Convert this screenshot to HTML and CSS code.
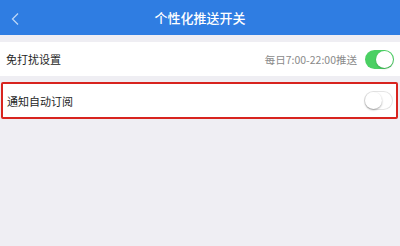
FILE: index.html
```html
<!DOCTYPE html>
<html lang="zh-CN">
<head>
    <meta charset="UTF-8">
    <meta name="viewport" content="width=device-width, initial-scale=1.0">
    <title>个性化推送开关</title>
    <link rel="stylesheet" href="styles.css">
</head>
<body>

    <!-- Top navigation bar -->
    <div class="nav-bar">
        <span class="back-btn">
            <svg width="8" height="12" viewBox="0 0 8 12">
                <path d="M7 0.5 L1.5 6 L7 11.5" fill="none" stroke="#bcd6f6" stroke-width="1.3"/>
            </svg>
        </span>
        <h1>个性化推送开关</h1>
    </div>

    <!-- Settings list -->
    <div class="setting-row">
        <span class="setting-name">免打扰设置</span>
        <div class="setting-right">
            <span class="setting-note">每日7:00-22:00推送</span>
            <span class="switch on"><span class="knob"></span></span>
        </div>
    </div>

    <div class="setting-row highlight">
        <span class="setting-name">通知自动订阅</span>
        <div class="setting-right">
            <span class="switch"><span class="knob"></span></span>
        </div>
    </div>

</body>
</html>
```

FILE: styles.css
```css
body {
    margin: 0;
    background-color: #efeef3;
    font-family: "Noto Sans CJK SC", "Liberation Sans", sans-serif;
}

/* Header bar */
.nav-bar {
    position: relative;
    height: 35px;
    background-color: #2f7de2;
    display: flex;
    align-items: center;
    justify-content: center;
}

.nav-bar h1 {
    margin: 0;
    font-size: 13px;
    font-weight: 500;
    color: #ffffff;
}

.back-btn {
    position: absolute;
    left: 11px;
    top: 13px;
    line-height: 0;
}

/* Rows */
.setting-row {
    display: flex;
    align-items: center;
    justify-content: space-between;
    background-color: #ffffff;
    margin-top: 7px;
    height: 34px;
    padding: 0 6px 0 6px;
}

.setting-name {
    font-size: 11px;
    color: #262626;
}

.setting-right {
    display: flex;
    align-items: center;
    gap: 8px;
}

.setting-note {
    font-size: 10.5px;
    color: #8a8a8a;
}

/* Red annotation box round the second row */
.setting-row.highlight {
    height: 33px;
    margin: 6px 2px 0 1px;
    padding: 0 3px 0 4px;
    border: 2px solid #d8241f;
    border-radius: 2px;
}

/* Toggle switch */
.switch {
    position: relative;
    display: inline-block;
    width: 29px;
    height: 19px;
    border-radius: 10px;
    background-color: #ffffff;
    box-shadow: inset 0 0 0 1px #e4e4e4;
}

.switch .knob {
    position: absolute;
    top: 1px;
    left: 1px;
    width: 17px;
    height: 17px;
    border-radius: 50%;
    background-color: #ffffff;
    box-shadow: 0 1px 2px rgba(0, 0, 0, 0.35);
}

.switch.on {
    background-color: #4bd063;
    box-shadow: none;
}

.switch.on .knob {
    left: 11px;
    box-shadow: 0 1px 2px rgba(0, 0, 0, 0.2);
}
```
